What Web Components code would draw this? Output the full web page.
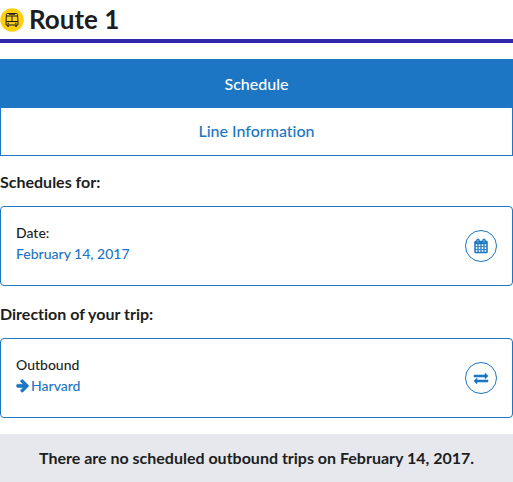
<!DOCTYPE html>
<html lang="en">
<head>
<meta charset="utf-8">
<meta name="viewport" content="width=device-width, initial-scale=1">
<title>Route 1 schedule</title>
<style>
:root { --brand: #1c76c3; --ink: #1c1e23; --line: #3026aa; --muted: #e7e8ed; }
body { margin: 0; background: #fff; color: var(--ink); font-family: Lato, "Open Sans", sans-serif; font-size: 14px; line-height: 21px; font-variant-ligatures: none; }
</style>
</head>
<body>
<route-page></route-page>
<script>
const define = (name, html, setup) => {
  const template = document.createElement('template');
  template.innerHTML = html;
  customElements.define(name, class extends HTMLElement {
    connectedCallback() {
      if (this.shadowRoot) return;
      this.attachShadow({ mode: 'open' }).append(template.content.cloneNode(true));
      if (setup) setup(this, this.shadowRoot);
    }
  });
};

const icons = {
  calendar: 'M192 1664h288v-288h-288v288zm352 0h320v-288h-320v288zm-352-352h288v-320h-288v320zm352 0h320v-320h-320v320zm-352-384h288v-288h-288v288zm736 736h320v-288h-320v288zm-384-736h320v-288h-320v288zm768 736h288v-288h-288v288zm-384-352h320v-320h-320v320zm-352-864v-288q0-13-9.5-22.5t-22.5-9.5h-64q-13 0-22.5 9.5t-9.5 22.5v288q0 13 9.5 22.5t22.5 9.5h64q13 0 22.5-9.5t9.5-22.5zm736 864h288v-320h-288v320zm-384-384h320v-288h-320v288zm384 0h288v-288h-288v288zm32-480v-288q0-13-9.5-22.5t-22.5-9.5h-64q-13 0-22.5 9.5t-9.5 22.5v288q0 13 9.5 22.5t22.5 9.5h64q13 0 22.5-9.5t9.5-22.5zm384-64v1280q0 52-38 90t-90 38h-1408q-52 0-90-38t-38-90v-1280q0-52 38-90t90-38h128v-96q0-66 47-113t113-47h64q66 0 113 47t47 113v96h384v-96q0-66 47-113t113-47h64q66 0 113 47t47 113v96h128q52 0 90 38t38 90z',
  exchange: 'M1792 1184v192q0 13-9.5 22.5t-22.5 9.5h-1376v192q0 13-9.5 22.5t-22.5 9.5q-12 0-24-10l-319-320q-9-9-9-22 0-14 9-23l320-320q9-9 23-9 13 0 22.5 9.5t9.5 22.5v192h1376q13 0 22.5 9.5t9.5 22.5zm0-544q0 14-9 23l-320 320q-9 9-23 9-13 0-22.5-9.5t-9.5-22.5v-192h-1376q-13 0-22.5-9.5t-9.5-22.5v-192q0-13 9.5-22.5t22.5-9.5h1376v-192q0-14 9-23t23-9q12 0 24 10l319 319q9 9 9 23z',
  arrow: 'M1675 971q0 51-37 90l-651 652q-39 37-91 37-51 0-90-37l-75-75q-38-38-38-91t38-91l293-293h-704q-52 0-84.5-37.5t-32.5-90.5v-128q0-53 32.5-90.5t84.5-37.5h704l-293-294q-38-36-38-90t38-90l75-75q38-38 90-38 53 0 91 38l651 651q37 35 37 90z'
};

define('glyph-icon', `
<style>
:host { display: inline-flex; width: 14px; height: 14px; }
svg { width: 100%; height: 100%; overflow: visible; fill: currentColor; stroke: currentColor; stroke-width: 70; }
</style>
<svg viewBox="0 0 1792 1792" aria-hidden="true"><path/></svg>`,
(host, root) => {
  root.querySelector('path').setAttribute('d', icons[host.getAttribute('name')]);
  if (host.getAttribute('name') === 'arrow') root.querySelector('svg').setAttribute('viewBox', '128 128 1600 1600');
});

define('bus-badge', `
<style>
:host { display: flex; width: 24px; height: 24px; }
svg { width: 100%; height: 100%; }
</style>
<svg viewBox="0 0 24 24" aria-hidden="true">
<circle cx="12" cy="12" r="11.7" fill="#ffce0c"/>
<path d="M7.500 5.500h9q1 0 1 1l.5 7v3.500H6v-3.500l.5-7q0-1 1-1z" fill="none" stroke="#1c1e23"/>
<path d="M6.500 8h11M6 13.500h12M12 8v5.500" fill="none" stroke="#1c1e23"/>
<path d="M9 6.300h6v.8H9zM7 17.300h2v1.400H7zM15 17.300h2v1.400h-2zM7.500 14.700H9v1H7.500zM15 14.700h1.500v1H15z" fill="#1c1e23"/>
</svg>`);

define('route-header', `
<style>
:host { display: flex; align-items: center; gap: 5px; border-bottom: 4px solid var(--line); }
h1 { margin: 0; font-size: 26px; line-height: 39px; font-weight: 700; }
</style>
<bus-badge></bus-badge><h1><slot></slot></h1>`);

define('tab-link', `
<style>
:host { display: block; }
a { display: block; padding: 11px 16px 12px; border: 1px solid var(--brand); border-top: 0; color: var(--brand); font-size: 16px; line-height: 24px; font-weight: 500; text-align: center; text-decoration: none; }
:host([selected]) a { padding: 12px 16px; border-top: 1px solid var(--brand); border-bottom: 0; background: var(--brand); color: #fff; }
</style>
<a href="#"><slot></slot></a>`,
(host, root) => { if (host.hasAttribute('selected')) root.querySelector('a').setAttribute('aria-current', 'page'); });

define('section-title', `
<style>
:host { display: block; }
h2 { margin: 0; font-size: 16px; line-height: 24px; font-weight: 700; }
</style>
<h2><slot></slot></h2>`);

define('option-card', `
<style>
:host { display: block; }
button { box-sizing: border-box; width: 100%; display: flex; align-items: center; justify-content: space-between; padding: 15px; border: 1px solid var(--brand); border-radius: 4px; background: #fff; color: var(--ink); font: inherit; text-align: left; cursor: pointer; }
.text { display: flex; flex-direction: column; padding-bottom: 6px; }
.value { display: flex; align-items: center; gap: 2px; color: var(--brand); }
.label, .value { font-weight: 500; }
.ring { display: flex; align-items: center; justify-content: center; box-sizing: border-box; width: 32px; height: 32px; border: 1px solid var(--brand); border-radius: 50%; color: var(--brand); }
</style>
<button type="button">
<span class="text"><span class="label"><slot name="label"></slot></span><span class="value"><slot></slot></span></span>
<span class="ring"><slot name="icon"></slot></span>
</button>`);

define('notice-bar', `
<style>
:host { display: block; padding: 12px 16px; background: var(--muted); font-size: 16px; line-height: 24px; font-weight: 700; text-align: center; }
</style>
<slot></slot>`);

define('route-page', `
<style>
:host { display: block; }
nav { margin: 16px 0 14px; }
section { display: flex; flex-direction: column; gap: 12px; margin-bottom: 16px; }
.arrow { width: 13px; height: 13px; }
</style>
<route-header>Route 1</route-header>
<nav aria-label="Route views"><tab-link selected>Schedule</tab-link><tab-link>Line Information</tab-link></nav>
<main>
<section><section-title>Schedules for:</section-title>
<option-card><span slot="label">Date:</span>February 14, 2017<glyph-icon slot="icon" name="calendar"></glyph-icon></option-card></section>
<section><section-title>Direction of your trip:</section-title>
<option-card><span slot="label">Outbound</span><glyph-icon class="arrow" name="arrow"></glyph-icon>Harvard<glyph-icon slot="icon" name="exchange"></glyph-icon></option-card></section>
<notice-bar role="status">There are no scheduled outbound trips on February 14, 2017.</notice-bar>
</main>`);
</script>
</body>
</html>
